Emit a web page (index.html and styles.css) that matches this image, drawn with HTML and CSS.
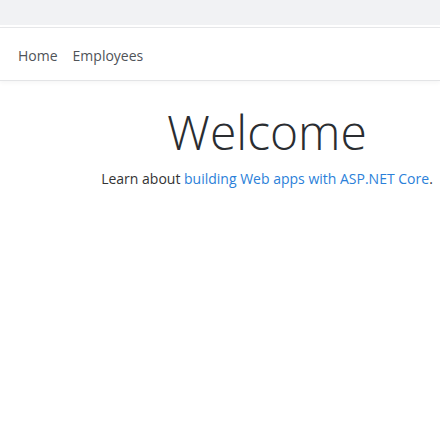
FILE: index.html
```html
<!DOCTYPE html>
<html>
<head>
<meta charset="utf-8">
<link rel="stylesheet" href="styles.css">
</head>
<body>
<div class="topbar"></div>
<header class="navbar">
  <nav class="nav">
    <a class="nav-link" href="#">Home</a>
    <a class="nav-link" href="#">Employees</a>
  </nav>
</header>
<main class="main">
  <h1 class="display">Welcome</h1>
  <p class="lead">Learn about <a class="link" href="#">building Web apps with ASP.NET Core</a>.</p>
</main>
</body>
</html>
```
FILE: styles.css
```css
html, body {
  margin: 0;
  padding: 0;
  background: #fff;
  font-family: "Open Sans", "Noto Sans", sans-serif;
  color: #212529;
}
.topbar {
  height: 25px;
  background: #f1f2f4;
  border-bottom: 2px solid #fff;
}
.navbar {
  height: 52px;
  border-top: 1px solid #e6e7e9;
  border-bottom: 1px solid #e3e4e6;
  box-shadow: 0 2px 4px rgba(0,0,0,0.04);
  background: #fff;
  display: flex;
  align-items: center;
  padding-left: 18px;
  padding-top: 3px;
  box-sizing: border-box;
  height: 54px;
}
.nav {
  display: flex;
  gap: 15px;
}
.nav-link {
  color: #4f5358;
  text-decoration: none;
  font-size: 14px;
}
.main {
  padding-left: 94px;
  text-align: center;
  white-space: nowrap;
}
.display {
  margin: 21px 0 0 0;
  font-size: 48px;
  font-weight: 300;
  line-height: 60px;
  color: #2a2d31;
}
.lead {
  margin: 7px 0 0 0;
  font-size: 14px;
  color: #333;
}
.link {
  color: #2b7fd9;
  text-decoration: none;
}
```
